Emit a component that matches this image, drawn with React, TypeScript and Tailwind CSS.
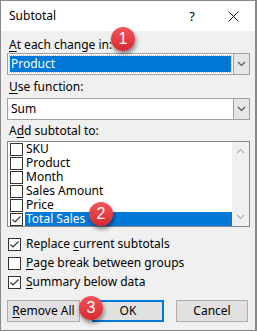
import React from "react";

const font = { fontFamily: '"Noto Sans", "Segoe UI", sans-serif' };

function Check({ checked }: { checked?: boolean }) {
  return (
    <span className="flex h-[13px] w-[13px] shrink-0 items-center justify-center border border-[#333333] bg-white">
      {checked && (
        <svg width="11" height="11" viewBox="0 0 11 11" fill="none">
          <path d="M1.5 5.5 L4 8 L9.5 2.5" stroke="#333333" strokeWidth="1.2" />
        </svg>
      )}
    </span>
  );
}

function Chevron({ color = "#555555", up = false }: { color?: string; up?: boolean }) {
  return (
    <svg width="9" height="6" viewBox="0 0 9 6" fill="none">
      <path d={up ? "M1 5 L4.5 1.5 L8 5" : "M1 1 L4.5 4.5 L8 1"} stroke={color} strokeWidth="1.2" />
    </svg>
  );
}

function Badge({ n, className }: { n: string; className: string }) {
  return (
    <span
      className={`absolute flex h-[24px] w-[24px] items-center justify-center rounded-full bg-gradient-to-b from-[#f0545c] to-[#d8262f] text-[16px] leading-none text-white shadow-[1px_3px_4px_rgba(0,0,0,0.45)] ${className}`}
      style={{ fontFamily: '"Liberation Sans", Arial, sans-serif' }}
    >
      {n}
    </span>
  );
}

function ComboBox({ value, focused }: { value: string; focused?: boolean }) {
  return (
    <div className="flex h-[22px] w-[243px] border border-[#a0a0a0] bg-white">
      <div className="flex flex-1 items-center p-[2px]">
        {focused ? (
          <div className="flex h-full w-full items-center bg-[#0078d7] pl-[1px] text-white outline-1 outline-dotted outline-[#f3b34b]">
            {value}
          </div>
        ) : (
          <div className="pl-[1px]">{value}</div>
        )}
      </div>
      <div className="flex w-[16px] items-center justify-center border-l border-[#a0a0a0] bg-[#e6e6e6]">
        <Chevron />
      </div>
    </div>
  );
}

const fields = ["SKU", "Product", "Month", "Sales Amount", "Price", "Total Sales"];

export default function App() {
  return (
    <div
      className="relative flex h-[331px] w-[257px] flex-col border border-r-2 border-[#8a8a8a] bg-[#f0f0f0] text-[12px] leading-[16px] text-black"
      style={font}
    >
      <div className="flex h-[30px] items-center bg-white pl-[8px]">
        <span className="flex-1 text-[12px]">Subtotal</span>
        <span className="mr-[33px] text-[13px]">?</span>
        <svg width="11" height="11" viewBox="0 0 11 11" className="mr-[16px]">
          <path d="M0.5 0.5 L10.5 10.5 M10.5 0.5 L0.5 10.5" stroke="#111111" strokeWidth="1" />
        </svg>
      </div>

      <div className="flex flex-col px-[6px]">
        <div className="mt-[6px] pl-[2px]">
          <span className="underline underline-offset-2">A</span>t each change in:
        </div>
        <div>
          <ComboBox value="Product" focused />
        </div>

        <div className="mt-[4px] pl-[2px]">
          <span className="underline underline-offset-2">U</span>se function:
        </div>
        <div className="mt-[3px]">
          <ComboBox value="Sum" />
        </div>

        <div className="mt-[3px] pl-[2px]">
          A<span className="underline underline-offset-2">d</span>d subtotal to:
        </div>
        <div className="mt-[2px] flex h-[86px] w-[243px] border border-[#828790] bg-white">
          <div className="flex flex-1 flex-col">
            {fields.map((f, i) => {
              const last = i === fields.length - 1;
              return (
                <div key={f} className="flex h-[14px] items-center pl-[2px] leading-[14px]">
                  <Check checked={last} />
                  <span
                    className={`ml-[2px] flex h-[14px] flex-1 items-center pl-[1px] ${
                      last ? "bg-[#0078d7] text-white" : ""
                    }`}
                  >
                    {f}
                  </span>
                </div>
              );
            })}
          </div>
          <div className="flex w-[17px] flex-col items-center justify-between bg-[#f0f0f0] py-[6px]">
            <Chevron color="#b0b0b0" up />
            <Chevron color="#b0b0b0" />
          </div>
        </div>

        <div className="mt-[10px] flex flex-col gap-[5px] pl-[1px] leading-[14px]">
          <label className="flex h-[14px] items-center gap-[5px]">
            <Check checked />
            <span>
              Replace <span className="underline underline-offset-2">c</span>urrent subtotals
            </span>
          </label>
          <label className="flex h-[14px] items-center gap-[5px]">
            <Check />
            <span>
              <span className="underline underline-offset-2">P</span>age break between groups
            </span>
          </label>
          <label className="flex h-[14px] items-center gap-[5px]">
            <Check checked />
            <span>
              <span className="underline underline-offset-2">S</span>ummary below data
            </span>
          </label>
        </div>

        <div className="mt-[11px] flex gap-[12px]">
          <button className="h-[22px] w-[73px] border border-[#adadad] bg-[#e1e1e1]">
            <span className="underline underline-offset-2">R</span>emove All
          </button>
          <button className="h-[22px] w-[72px] border-2 border-[#0078d7] bg-[#e1e1e1]">OK</button>
          <button className="h-[22px] w-[72px] border border-[#adadad] bg-[#e1e1e1]">Cancel</button>
        </div>
      </div>

      <Badge n="1" className="left-[110px] top-[26px]" />
      <Badge n="2" className="left-[88px] top-[201px]" />
      <Badge n="3" className="left-[78px] top-[295px]" />
    </div>
  );
}
